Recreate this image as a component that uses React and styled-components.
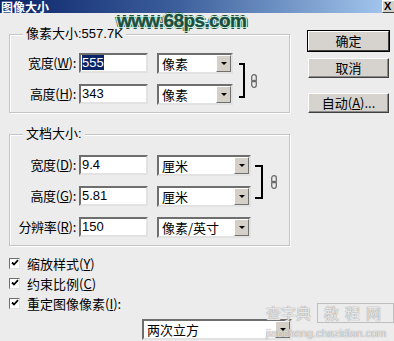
import React from 'react';
import styled, { createGlobalStyle } from 'styled-components';

const Global = createGlobalStyle`
  html, body { margin: 0; padding: 0; background: #ececec; }
  body {
    font-family: "Liberation Sans", "Noto Sans CJK SC", sans-serif;
    font-size: 13px;
    color: #000;
  }
`;

const Dialog = styled.div`
  position: relative;
  width: 394px;
  height: 341px;
  overflow: hidden;
  background: #ececec;
`;

const TitleBar = styled.div`
  height: 13px;
  display: flex;
  align-items: center;
  justify-content: space-between;
  background: linear-gradient(to right, #0a246a 0%, #3d5f9c 45%, #a6caf0 100%);
`;

const Title = styled.span`
  padding-left: 1px;
  color: #fff;
  font-weight: bold;
  font-size: 12px;
  line-height: 13px;
  height: 13px;
  font-family: "Noto Sans CJK SC", sans-serif;
`;

const CloseBtn = styled.div`
  width: 15px;
  height: 11px;
  margin-right: -6px;
  background: #d4d0c8;
  border: 1px solid;
  border-color: #fff #404040 #404040 #fff;
  font: bold 11px/11px "Liberation Sans", sans-serif;
  padding-left: 1px;
`;

const Mark = styled.div`
  position: absolute;
  left: 117px;
  top: 10px;
  font: bold 19px/22px "Liberation Sans", sans-serif;
  color: #1b4f40;
  letter-spacing: -0.6px;
  text-shadow: 1px 0 #d8f4e8, -1px 0 #d8f4e8, 0 1px #d8f4e8, 0 -1px #d8f4e8,
    1px 1px #d8f4e8, -1px -1px #d8f4e8, 1px -1px #d8f4e8, -1px 1px #d8f4e8,
    2px 0 #1b4f40, -2px 0 #1b4f40, 0 2px #1b4f40, 0 -2px #1b4f40;
  -webkit-text-stroke: 0.4px #1b4f40;
`;

const Stamp = styled.div`
  position: absolute;
  left: 266px;
  top: 303px;
  color: rgba(255, 255, 255, 0.75);
  text-shadow: 0 0 1px #999, 0 0 1px #999;
  font-family: "Noto Sans CJK SC", sans-serif;
`;

const StampTop = styled.div`
  display: flex;
  align-items: center;
  gap: 6px;
  font-size: 15px;
  line-height: 18px;
`;

const StampBox = styled.span`
  border: 1px solid rgba(180, 180, 180, 0.8);
  padding: 0 6px;
  letter-spacing: 6px;
`;

const StampUrl = styled.div`
  font: 11px/14px "Liberation Sans", sans-serif;
  margin-top: 3px;
`;

const Body = styled.div`
  display: flex;
  padding-left: 9px;
`;

const LeftCol = styled.div`
  width: 283px;
  display: flex;
  flex-direction: column;
`;

const RightCol = styled.div`
  margin-left: 16px;
  padding-top: 18px;
  width: 81px;
  display: flex;
  flex-direction: column;
`;

const Group = styled.div`
  position: relative;
  width: 279px;
  margin-top: 21px;
  border: 1px solid #c4c4c4;
  box-shadow: inset 1px 1px 0 #fff, 1px 1px 0 #fff;
  padding: ${p => p.$pad}px 0 7px 0;
  display: flex;
  align-items: flex-start;
`;

const Legend = styled.span`
  position: absolute;
  left: 13px;
  top: -9px;
  padding: 0 3px;
  background: #ececec;
  line-height: 16px;
`;

const Rows = styled.div`
  display: grid;
  grid-template-columns: 66px 69px ${p => p.$sel}px;
  column-gap: 3px;
  row-gap: 10px;
  align-items: start;
  & > :nth-child(3n) { margin-left: 6px; }
`;

const Label = styled.label`
  text-align: right;
  line-height: 20px;
  white-space: nowrap;
  font-family: "Noto Sans CJK SC", "Liberation Sans", sans-serif;
  letter-spacing: -0.3px;
`;

const Field = styled.div`
  box-sizing: border-box;
  height: 20px;
  background: #fff;
  border: 2px solid;
  border-color: #6e6e6e #e2e2e2 #e2e2e2 #6e6e6e;
  padding-left: 1px;
  line-height: 16px;
  font-size: 13px;
`;

const Selected = styled.span`
  background: #0a246a;
  color: #fff;
`;

const Select = styled.div`
  box-sizing: border-box;
  width: ${p => p.$w}px;
  height: 21px;
  display: flex;
  background: #fff;
  border: 2px solid;
  border-color: #6e6e6e #e2e2e2 #e2e2e2 #6e6e6e;
`;

const SelectText = styled.span`
  flex: 1;
  padding-left: 3px;
  line-height: 17px;
  font-family: "Noto Sans CJK SC", sans-serif;
`;

const DropBtn = styled.span`
  box-sizing: border-box;
  width: 15px;
  background: #d4d0c8;
  border: 1px solid;
  border-color: #fff #707070 #707070 #fff;
  display: flex;
  align-items: center;
  justify-content: center;
  &::after {
    content: "";
    border-left: 3px solid transparent;
    border-right: 3px solid transparent;
    border-top: 3px solid #000;
  }
`;

const Link = styled.div`
  display: flex;
  align-items: center;
  margin: 10px 0 0 ${p => p.$gap}px;
`;

const Bracket = styled.div`
  width: ${p => p.$w}px;
  height: ${p => p.$h}px;
  border: 2px solid #000;
  border-left: none;
`;

const Chain = styled.svg`
  margin-left: ${p => p.$gap}px;
`;

const Checks = styled.div`
  margin-top: 7px;
  display: flex;
  flex-direction: column;
`;

const CheckRow = styled.label`
  height: 20px;
  display: flex;
  align-items: center;
  font-family: "Noto Sans CJK SC", "Liberation Sans", sans-serif;
`;

const Box = styled.span`
  box-sizing: border-box;
  width: 11px;
  height: 11px;
  margin-right: 7px;
  background: #fff;
  border: 1px solid;
  border-color: #6e6e6e #e2e2e2 #e2e2e2 #6e6e6e;
  display: flex;
  align-items: center;
  justify-content: center;
`;

const Resample = styled.div`
  margin: 6px 0 0 133px;
`;

const Button = styled.div`
  box-sizing: border-box;
  height: ${p => p.$h || 20}px;
  margin-top: ${p => p.$mt || 0}px;
  background: #d6d3ce;
  border: 1px solid;
  border-color: #fff #404040 #404040 #fff;
  box-shadow: ${p => (p.$default ? '0 0 0 1px #000' : 'inset -1px -1px 0 #8a8a8a')};
  text-align: center;
  line-height: 18px;
  font-family: "Noto Sans CJK SC", "Liberation Sans", sans-serif;
`;

const Check = () => (
  <svg width="8" height="8" viewBox="0 0 8 8">
    <path d="M1 3.5 L3 5.5 L7 1.2" fill="none" stroke="#000" strokeWidth="1.8" />
  </svg>
);

const ChainIcon = ({ gap }) => (
  <Chain $gap={gap} width="6" height="14" viewBox="0 0 6 14">
    <rect x="0.7" y="0.7" width="4.6" height="7" rx="2.2" fill="none" stroke="#6b6b6b" strokeWidth="1.3" />
    <rect x="0.7" y="6.3" width="4.6" height="7" rx="2.2" fill="none" stroke="#6b6b6b" strokeWidth="1.3" />
  </Chain>
);

const Dropdown = ({ w, children }) => (
  <Select $w={w}>
    <SelectText>{children}</SelectText>
    <DropBtn />
  </Select>
);

export default function App() {
  return (
    <Dialog>
      <Global />
      <TitleBar>
        <Title>图像大小</Title>
        <CloseBtn>X</CloseBtn>
      </TitleBar>
      <Body>
        <LeftCol>
          <Group $pad={18}>
            <Legend>像素大小:557.7K</Legend>
            <Rows $sel={76}>
              <Label>宽度(<u>W</u>):</Label>
              <Field><Selected>555</Selected></Field>
              <Dropdown w={76}>像素</Dropdown>
              <Label>高度(<u>H</u>):</Label>
              <Field>343</Field>
              <Dropdown w={76}>像素</Dropdown>
            </Rows>
            <Link $gap={12}>
              <Bracket $w={4} $h={31} />
              <ChainIcon gap={6} />
            </Link>
          </Group>
          <Group $pad={20}>
            <Legend>文档大小:</Legend>
            <Rows $sel={94}>
              <Label>宽度(<u>D</u>):</Label>
              <Field>9.4</Field>
              <Dropdown w={94}>厘米</Dropdown>
              <Label>高度(<u>G</u>):</Label>
              <Field>5.81</Field>
              <Dropdown w={94}>厘米</Dropdown>
              <Label>分辨率(<u>R</u>):</Label>
              <Field>150</Field>
              <Dropdown w={94}>像素/英寸</Dropdown>
            </Rows>
            <Link $gap={10}>
              <Bracket $w={6} $h={30} />
              <ChainIcon gap={8} />
            </Link>
          </Group>
          <Checks>
            <CheckRow><Box><Check /></Box>缩放样式(<u>Y</u>)</CheckRow>
            <CheckRow><Box><Check /></Box>约束比例(<u>C</u>)</CheckRow>
            <CheckRow><Box><Check /></Box>重定图像像素(<u>I</u>):</CheckRow>
          </Checks>
          <Resample>
            <Dropdown w={150}>两次立方</Dropdown>
          </Resample>
        </LeftCol>
        <RightCol>
          <Button $default>确定</Button>
          <Button $mt={7}>取消</Button>
          <Button $mt={15}>自动(<u>A</u>)...</Button>
        </RightCol>
      </Body>
      <Mark>www.68ps.com</Mark>
      <Stamp>
        <StampTop>查字典<StampBox>教程网</StampBox></StampTop>
        <StampUrl>jiaocheng.chazidian.com</StampUrl>
      </Stamp>
    </Dialog>
  );
}
